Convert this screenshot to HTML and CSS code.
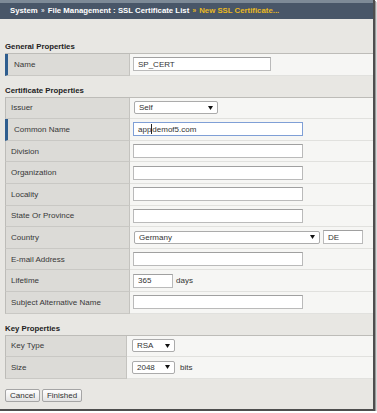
FILE: index.html
```html
<!DOCTYPE html>
<html lang="en">
<head>
  <meta charset="UTF-8">
  <meta name="viewport" content="width=device-width, initial-scale=1.0">
  <title>New SSL Certificate</title>
  <link rel="stylesheet" href="styles.css">
</head>
<body>
  <div class="frame">
    <header class="crumbs">System <span class="sep">»</span> File Management : SSL Certificate List <span class="current"><span class="sep">»</span> New SSL Certificate...</span></header>
    <main class="content">
      <h2 class="section-title">General Properties</h2>
      <div class="props">
        <div class="row required">
          <div class="label">Name</div>
          <div class="value"><input class="text short" value="SP_CERT"></div>
        </div>
      </div>

      <h2 class="section-title">Certificate Properties</h2>
      <div class="props">
        <div class="row">
          <div class="label">Issuer</div>
          <div class="value">
            <div class="select issuer"><span>Self</span><svg width="5" height="4" viewBox="0 0 5 4"><polygon points="0,0 5,0 2.5,4" fill="#111"/></svg></div>
          </div>
        </div>
        <div class="row required">
          <div class="label">Common Name</div>
          <div class="value"><div class="text focused">app<span class="caret"></span>demof5.com</div></div>
        </div>
        <div class="row">
          <div class="label">Division</div>
          <div class="value"><input class="text"></div>
        </div>
        <div class="row">
          <div class="label">Organization</div>
          <div class="value"><input class="text"></div>
        </div>
        <div class="row">
          <div class="label">Locality</div>
          <div class="value"><input class="text"></div>
        </div>
        <div class="row">
          <div class="label">State Or Province</div>
          <div class="value"><input class="text"></div>
        </div>
        <div class="row">
          <div class="label">Country</div>
          <div class="value">
            <div class="select country"><span>Germany</span><svg width="5" height="4" viewBox="0 0 5 4"><polygon points="0,0 5,0 2.5,4" fill="#111"/></svg></div>
            <input class="text tiny" value="DE">
          </div>
        </div>
        <div class="row">
          <div class="label">E-mail Address</div>
          <div class="value"><input class="text"></div>
        </div>
        <div class="row">
          <div class="label">Lifetime</div>
          <div class="value"><input class="text tiny" value="365"><span class="unit">days</span></div>
        </div>
        <div class="row">
          <div class="label">Subject Alternative Name</div>
          <div class="value"><input class="text"></div>
        </div>
      </div>

      <h2 class="section-title">Key Properties</h2>
      <div class="props keys">
        <div class="row">
          <div class="label">Key Type</div>
          <div class="value">
            <div class="select small"><span>RSA</span><svg width="5" height="4" viewBox="0 0 5 4"><polygon points="0,0 5,0 2.5,4" fill="#111"/></svg></div>
          </div>
        </div>
        <div class="row">
          <div class="label">Size</div>
          <div class="value">
            <div class="select small"><span>2048</span><svg width="5" height="4" viewBox="0 0 5 4"><polygon points="0,0 5,0 2.5,4" fill="#111"/></svg></div>
            <span class="unit bits">bits</span>
          </div>
        </div>
      </div>

      <div class="actions">
        <button class="btn">Cancel</button>
        <button class="btn">Finished</button>
      </div>
    </main>
  </div>
</body>
</html>
```

FILE: styles.css
```css
html,
body {
  margin: 0;
  background: #fff;
}

body {
  font: 8px "Liberation Sans", Arial, sans-serif;
  color: #333;
}

.frame {
  width: 373px;
  height: 409px;
  background: #e8e7e3;
  border-right: 2px solid #4e4e4e;
  border-bottom: 2px solid #4e4e4e;
  box-shadow: 1px 1px 0 #9a9a9a, 2px 2px 0 #d8d8d8;
  overflow: hidden;
}

.crumbs {
  height: 16px;
  border-top: 3px solid #7d8a97;
  background: #485668;
  color: #fff;
  font-weight: bold;
  font-size: 7.8px;
  line-height: 16px;
  padding-left: 10px;
  white-space: nowrap;
}

.crumbs .sep {
  font-size: 6.5px;
  color: #d9dde2;
  margin: 0 1px;
}

.crumbs .current,
.crumbs .current .sep {
  color: #e9b921;
}

.content {
  padding: 22px 0 0 5px;
}

.section-title {
  margin: 9px 0 0;
  font-size: 7.8px;
  font-weight: bold;
  line-height: 12px;
  color: #222;
}

.content > .section-title:first-child {
  margin-top: 0;
}

.props {
  border-top: 1px solid #bdbcb8;
}

.row {
  display: grid;
  grid-template-columns: 125px 1fr;
  height: 21.6px;
}

.keys .row {
  grid-template-columns: 122px 1fr;
}

.label {
  box-sizing: border-box;
  display: flex;
  align-items: center;
  padding-left: 5px;
  background: #dcdbd7;
  border-left: 1px solid #bdbcb8;
  border-right: 1px solid #c4c3bf;
  border-bottom: 1px solid #c9c8c4;
  color: #383838;
  white-space: nowrap;
}

.required .label {
  border-left: 3px solid #2f5e8f;
  padding-left: 6px;
}

.value {
  display: flex;
  align-items: center;
  gap: 3px;
  padding-left: 3px;
  background: #f6f6f4;
  border-bottom: 1px solid #e1e1de;
}

.keys .value {
  padding-left: 5px;
}

.text {
  box-sizing: border-box;
  width: 170px;
  height: 14px;
  margin: 0;
  padding: 0 4px;
  border: 1px solid #bababa;
  border-top-color: #a0a0a0;
  background: #fff;
  font: inherit;
  color: #333;
}

.text.short {
  width: 138px;
}

.text.tiny {
  width: 40px;
}

.text.focused {
  display: flex;
  align-items: center;
  border-color: #7f9fd6;
}

.caret {
  width: 1px;
  height: 10px;
  background: #222;
}

.select {
  box-sizing: border-box;
  height: 13px;
  margin-left: 1px;
  padding: 0 4px;
  display: flex;
  align-items: center;
  justify-content: space-between;
  border: 1px solid #ababab;
  border-radius: 2px;
  background: #fff;
  color: #333;
}

.select.issuer {
  width: 84px;
}

.select.country {
  width: 186px;
}

.select.small {
  width: 43px;
  margin-left: 0;
}

.unit {
  color: #333;
}

.unit.bits {
  margin-left: 2px;
}

.actions {
  display: flex;
  gap: 2px;
  margin-top: 10px;
}

.btn {
  height: 13px;
  margin: 0;
  padding: 0 4px;
  border: 1px solid #a5a5a5;
  border-radius: 2px;
  background: linear-gradient(to bottom, #fdfdfd 0%, #f2f2f2 50%, #e2e2e2 100%);
  font: inherit;
  line-height: 11px;
  color: #333;
}
```
